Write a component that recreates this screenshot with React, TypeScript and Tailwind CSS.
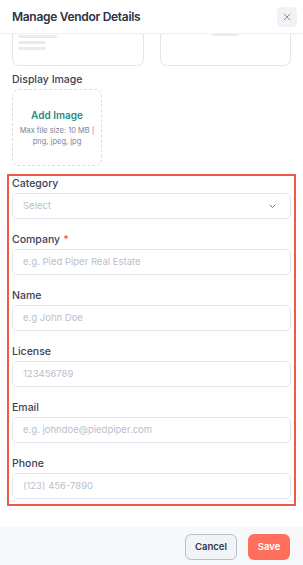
import React from "react";

const fields = [
  { label: "Company", placeholder: "e.g. Pied Piper Real Estate", required: true },
  { label: "Name", placeholder: "e.g John Doe" },
  { label: "License", placeholder: "123456789" },
  { label: "Email", placeholder: "e.g. johndoe@piedpiper.com" },
  { label: "Phone", placeholder: "(123) 456-7890" },
];

export default function App() {
  return (
    <div className="w-[303px] h-[565px] bg-white flex flex-col overflow-hidden font-['Inter','Noto_Sans',sans-serif]">
      <div className="h-[34px] shrink-0 border-b border-[#eef0f3] flex items-center justify-between pl-3 pr-[6px]">
        <span className="text-[12px] tracking-[-0.3px] font-semibold text-[#2b3245] leading-none">Manage Vendor Details</span>
        <button className="w-[20px] h-[20px] rounded-[5px] bg-[#f1f2f6] flex items-center justify-center">
          <svg width="8" height="8" viewBox="0 0 8 8" fill="none" stroke="#8a90a0" strokeWidth="1" strokeLinecap="round">
            <path d="M1 1L7 7M7 1L1 7" />
          </svg>
        </button>
      </div>
      <div className="flex-1 px-3">
        <div className="grid grid-cols-2 gap-4">
          <div className="h-[32px] border-x border-b border-[#e3e7ed] rounded-b-[7px] pl-[5px] pt-[1px] flex flex-col gap-[3px]">
            <div className="w-[39px] h-[3px] bg-[#e8ebf0] rounded-full" />
            <div className="w-[28px] h-[3px] bg-[#e8ebf0] rounded-full" />
            <div className="w-[28px] h-[3px] bg-[#e8ebf0] rounded-full" />
          </div>
          <div className="h-[32px] border-x border-b border-[#e3e7ed] rounded-b-[7px] flex justify-center">
            <div className="w-[27px] h-[2px] bg-[#e8ebf0] rounded-b-full" />
          </div>
        </div>
        <div className="mt-2 text-[10.5px] leading-[12px] font-medium text-[#3b4256]">Display Image</div>
        <div className="mt-[3px] w-[90px] h-[77px] border border-dashed border-[#d9dde4] rounded-[7px] flex flex-col items-center justify-center">
          <div className="text-[10px] font-semibold text-[#2a8a80] leading-[13px]">Add Image</div>
          <div className="mt-[3px] text-[7.5px] leading-[11px] text-[#7c8494] text-center">Max file size: 10 MB |<br />png, jpeg, jpg</div>
        </div>
        <div className="mt-2 -mx-[5px] border-2 border-[#f05a45] px-[3px] pt-[2px] pb-[5px]">
          <div className="text-[10.5px] leading-[12px] font-medium text-[#3b4256]">Category</div>
          <div className="mt-[3px] h-[26px] border border-[#e3e7ed] rounded-[5px] flex items-center justify-between pl-[10px] pr-[14px]">
            <span className="text-[9.5px] text-[#b9c0cb]">Select</span>
            <svg width="7" height="5" viewBox="0 0 7 5" fill="none" stroke="#6b7280" strokeWidth="1" strokeLinecap="round" strokeLinejoin="round">
              <path d="M1 1L3.5 3.5L6 1" />
            </svg>
          </div>
          {fields.map((f) => (
            <div key={f.label}>
              <div className="mt-[15px] text-[10.5px] leading-[12px] font-medium text-[#3b4256]">
                {f.label}
                {f.required && <span className="text-[#f05a45] ml-[3px]">*</span>}
              </div>
              <div className="mt-[3px] h-[26px] border border-[#e3e7ed] rounded-[5px] flex items-center pl-[10px]">
                <span className="text-[9.5px] text-[#b9c0cb]">{f.placeholder}</span>
              </div>
            </div>
          ))}
        </div>
      </div>
      <div className="h-[38px] shrink-0 bg-[#f7f8fa] flex items-start justify-end gap-[11px] pt-[7px] pr-[13px]">
        <button className="h-[26px] w-[52px] rounded-[6px] bg-[#f1f3f7] border border-[#b8c0cc] text-[9.5px] font-semibold text-[#2d3748]">Cancel</button>
        <button className="h-[26px] w-[42px] rounded-[6px] bg-[#ff6f5b] text-[9.5px] font-semibold text-white">Save</button>
      </div>
    </div>
  );
}
